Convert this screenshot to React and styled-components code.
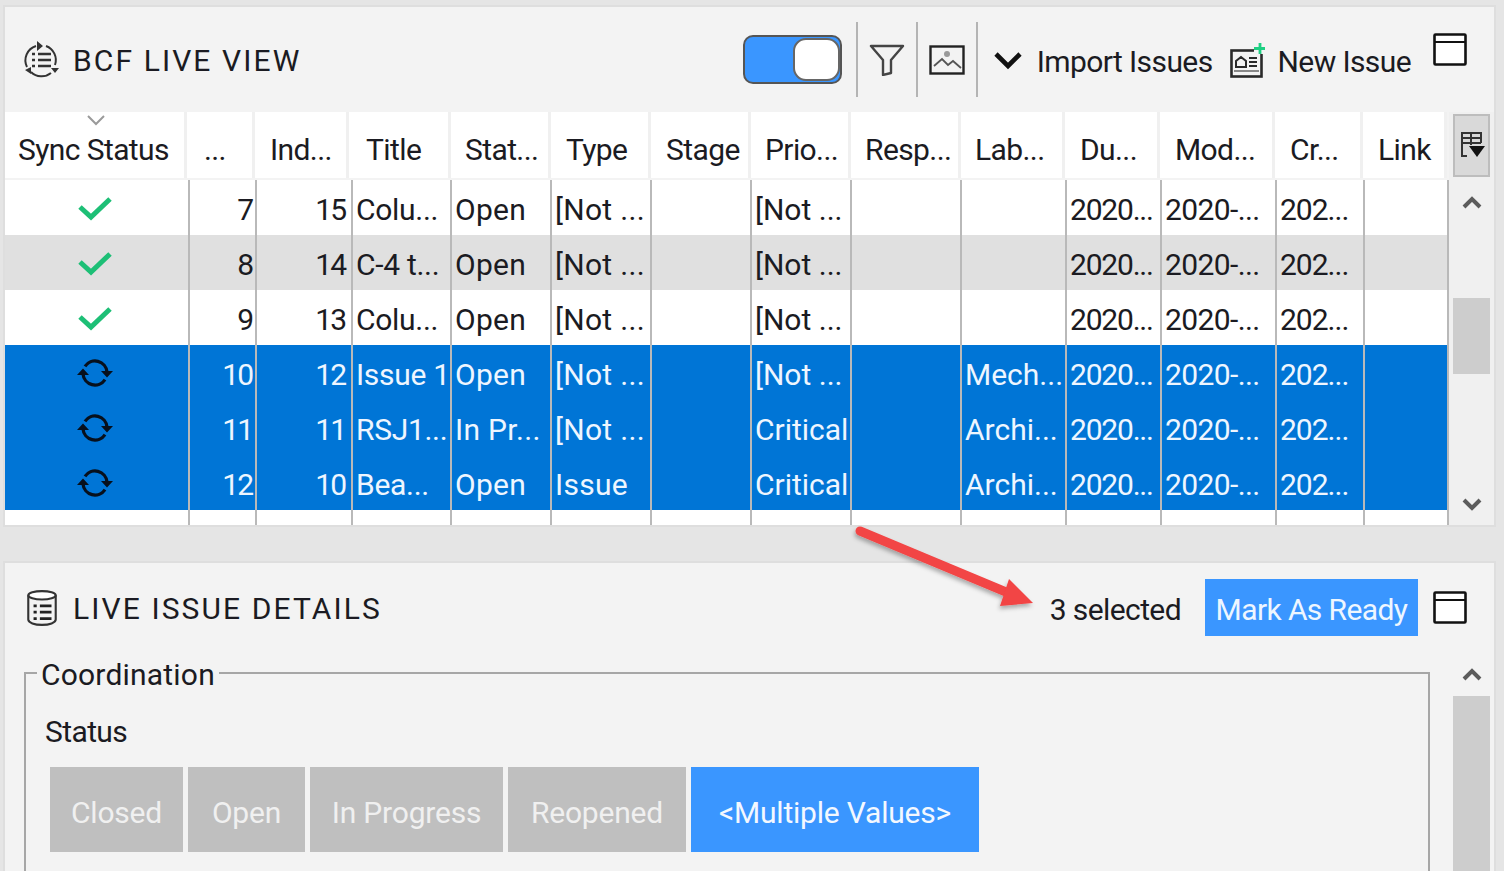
import React from "react";
import styled, { createGlobalStyle } from "styled-components";

const GlobalStyle = createGlobalStyle`
  html, body {
    margin: 0;
    padding: 0;
    background: #e5e5e5;
  }
`;

const BODY_COLS = "185px 67px 96px 99px 100px 100px 100px 100px 110px 105px 95px 115px 88px 84px";
const HEAD_COLS = "182px 68px 94px 102px 100px 100px 100px 100px 110px 104px 95px 115px 88px 84px";

const Page = styled.div`
  position: relative;
  width: 1504px;
  height: 871px;
  overflow: hidden;
  padding: 7px 10px 0 5px;
  box-sizing: border-box;
  background: #e5e5e5;
  font-family: Roboto, "Open Sans", sans-serif;
  font-size: 30px;
  letter-spacing: -0.6px;
  color: #1b1b22;
`;

const Panel = styled.section`
  background: #f3f3f3;
  box-shadow: 0 0 0 2px #dedede;
`;

const PanelHeader = styled.header`
  display: flex;
  align-items: center;
  height: ${(p) => p.$height}px;
  padding-left: ${(p) => p.$inset}px;
`;

const PanelTitle = styled.h2`
  margin: 0 0 0 ${(p) => p.$gap}px;
  padding-top: 2px;
  font-size: 30px;
  font-weight: 400;
  letter-spacing: 2.1px;
  white-space: nowrap;
`;

const Tools = styled.div`
  display: flex;
  align-items: center;
  margin-left: auto;
  height: 100%;
`;

const Toggle = styled.div`
  position: relative;
  width: 99px;
  height: 49px;
  box-sizing: border-box;
  border: 2px solid #555;
  border-radius: 10px;
  background: #3a96ff;
  margin-right: 14px;
`;

const Knob = styled.span`
  position: absolute;
  top: 1px;
  right: 0;
  width: 47px;
  height: 43px;
  box-sizing: border-box;
  border: 2px solid #666;
  border-radius: 13px;
  background: #fff;
`;

const Divider = styled.span`
  width: 2px;
  height: 75px;
  background: #b4b4b4;
`;

const ToolSlot = styled.span`
  display: flex;
  align-items: center;
  justify-content: center;
  width: 58px;
`;

const MenuChevron = styled.span`
  display: flex;
  margin: 0 14px 0 15px;
`;

const ToolLabel = styled.span`
  white-space: nowrap;
  padding-top: 3px;
  margin: ${(p) => p.$margin};
`;

const TableArea = styled.div`
  display: flex;
`;

const TableMain = styled.div`
  width: 1444px;
`;

const HeadRow = styled.div`
  display: grid;
  grid-template-columns: ${HEAD_COLS};
  height: 68px;
  background: #f3f3f3;
`;

const HeadCell = styled.div`
  position: relative;
  display: flex;
  align-items: center;
  height: 66px;
  padding: 9px 0 0 ${(p) => p.$pad}px;
  box-sizing: border-box;
  background: #fff;
  border-right: 3px solid #f0f0f0;
  white-space: nowrap;
  overflow: hidden;
`;

const SortMark = styled.svg`
  position: absolute;
  top: 2px;
  left: 81px;
`;

const Row = styled.div`
  display: grid;
  grid-template-columns: ${BODY_COLS};
  height: ${(p) => p.$height || 55}px;
  background: ${(p) => (p.$selected ? "#0075d6" : p.$shaded ? "#e0e0e0" : "#fff")};
  color: ${(p) => (p.$selected ? "#eef6ff" : "#1b1b22")};
`;

const Cell = styled.div`
  display: flex;
  align-items: center;
  padding: 3px 0 0 3px;
  box-sizing: border-box;
  border-right: 2px solid #b9b9b9;
  letter-spacing: ${(p) => p.$spacing ?? 0.3}px;
  white-space: nowrap;
  overflow: hidden;
`;

const NumberCell = styled(Cell)`
  justify-content: flex-end;
  padding: 3px ${(p) => p.$pad}px 0 0;
  letter-spacing: -2px;
`;

const IconCell = styled(Cell)`
  justify-content: center;
  padding: 0 3px 0 0;
`;

const ScrollTrack = styled.div`
  flex: 1;
  display: flex;
  flex-direction: column;
  padding-left: 4px;
  background: #f0f0f0;
`;

const ColumnPicker = styled.div`
  display: flex;
  align-items: center;
  justify-content: center;
  width: 37px;
  height: 63px;
  margin: 2px 0 3px;
  box-sizing: border-box;
  background: #d9d9d9;
  border: 2px solid #bdbdbd;
`;

const ScrollBar = styled.div`
  display: flex;
  flex-direction: column;
  align-items: center;
  width: 37px;
  height: ${(p) => p.$height}px;
  overflow: hidden;
`;

const ScrollButton = styled.div`
  display: flex;
  align-items: center;
  justify-content: center;
  flex: none;
  width: 100%;
  height: ${(p) => p.$height}px;
  padding-top: ${(p) => p.$nudge || 0}px;
  box-sizing: border-box;
`;

const ScrollThumb = styled.div`
  flex: none;
  width: 100%;
  height: ${(p) => p.$height}px;
  margin: ${(p) => p.$margin || 0};
  background: #cdcdcd;
`;

const LowerPanel = styled(Panel)`
  margin-top: 38px;
  height: 320px;
`;

const SelectedCount = styled.span`
  white-space: nowrap;
  padding-top: 3px;
  margin-right: 24px;
`;

const ReadyButton = styled.button`
  width: 213px;
  height: 57px;
  margin-right: 15px;
  padding: 4px 0 0;
  border: 0;
  background: #3a96ff;
  color: #eef6ff;
  font: inherit;
  letter-spacing: inherit;
  white-space: nowrap;
`;

const WindowSlot = styled.span`
  display: flex;
  margin-right: 27px;
  transform: translateY(${(p) => p.$shift || 0}px);
`;

const DetailsArea = styled.div`
  display: flex;
  height: 231px;
`;

const Group = styled.fieldset`
  width: 1406px;
  height: 300px;
  margin: 0 0 0 19px;
  padding: 18px 0 0 19px;
  box-sizing: border-box;
  border: 2px solid #a6a6a6;
`;

const GroupLegend = styled.legend`
  margin-left: -8px;
  padding: 4px 4px 0;
  line-height: 38px;
  letter-spacing: 0.2px;
`;

const FieldLabel = styled.div`
  line-height: 40px;
`;

const StatusRow = styled.div`
  display: flex;
  gap: 5px;
  margin: 15px 0 0 5px;
`;

const StatusButton = styled.div`
  display: flex;
  align-items: center;
  justify-content: center;
  width: ${(p) => p.$width}px;
  height: 85px;
  padding-top: 5px;
  box-sizing: border-box;
  background: ${(p) => (p.$active ? "#3a96ff" : "#bfbfbf")};
  color: ${(p) => (p.$active ? "#f3f8ff" : "#f0f0f0")};
  letter-spacing: -0.2px;
  white-space: nowrap;
`;

const DetailsScroll = styled.div`
  margin-left: 23px;
`;

const AnnotationArrow = styled.svg`
  position: absolute;
  left: 0;
  top: 0;
  pointer-events: none;
`;

const HEADERS = [
  { label: "Sync Status", pad: 13 },
  { label: "...", pad: 17 },
  { label: "Ind...", pad: 15 },
  { label: "Title", pad: 17 },
  { label: "Stat...", pad: 14 },
  { label: "Type", pad: 15 },
  { label: "Stage", pad: 15 },
  { label: "Prio...", pad: 14 },
  { label: "Resp...", pad: 14 },
  { label: "Lab...", pad: 14 },
  { label: "Du...", pad: 15 },
  { label: "Mod...", pad: 15 },
  { label: "Cr...", pad: 15 },
  { label: "Link", pad: 15 },
];

const ROWS = [
  { state: "done", n: "7", index: "15", title: "Colu...", status: "Open", type: "[Not ...", prio: "[Not ...", label: "" },
  { state: "done", n: "8", index: "14", title: "C-4 t...", status: "Open", type: "[Not ...", prio: "[Not ...", label: "", shaded: true },
  { state: "done", n: "9", index: "13", title: "Colu...", status: "Open", type: "[Not ...", prio: "[Not ...", label: "" },
  { state: "sync", n: "10", index: "12", title: "Issue 1", status: "Open", type: "[Not ...", prio: "[Not ...", label: "Mech..." },
  { state: "sync", n: "11", index: "11", title: "RSJ1...", status: "In Pr...", type: "[Not ...", prio: "Critical", label: "Archi..." },
  { state: "sync", n: "12", index: "10", title: "Bea...", status: "Open", type: "Issue", prio: "Critical", label: "Archi..." },
];

const STATUSES = [
  { label: "Closed", width: 133 },
  { label: "Open", width: 117 },
  { label: "In Progress", width: 193 },
  { label: "Reopened", width: 178 },
  { label: "<Multiple Values>", width: 288, active: true },
];

function CheckIcon() {
  return (
    <svg width="36" height="26" viewBox="0 0 36 26">
      <path d="M3 12l11 10L33 4" fill="none" stroke="#1dbf76" strokeWidth="5" />
    </svg>
  );
}

function SyncIcon() {
  return (
    <svg width="36" height="28" viewBox="0 0 36 28" fill="none" stroke="#07101c" strokeWidth="3.2">
      <path d="M8 7.400A12 12 0 0 1 30 13" />
      <path d="M28 20.600A12 12 0 0 1 6 15" />
      <path d="M24 12h12l-6 6.500zM0 16h12l-6-6.500z" fill="#07101c" stroke="none" />
    </svg>
  );
}

function SyncListIcon() {
  return (
    <svg width="38" height="40" viewBox="0 0 38 40" fill="none" stroke="#333">
      <path d="M14 6A15 15 0 0 0 5 27M9 32a15 15 0 0 0 20 1M33 25A15 15 0 0 0 24 6" strokeWidth="2" />
      <path d="M15 1l6 5-6 5zM29 28h8l-4 5zM3 30l6-3v7z" fill="#333" stroke="none" />
      <path d="M10 14h3M16 14h13M10 20h3M16 20h13M10 26h3M16 26h13" strokeWidth="2.6" />
    </svg>
  );
}

function DatabaseIcon() {
  return (
    <svg width="34" height="38" viewBox="0 0 32 36" fill="none" stroke="#333" strokeWidth="2">
      <ellipse cx="16" cy="6" rx="13" ry="4" fill="#fff" />
      <path d="M3 6v23c0 3 6 5 13 5s13-2 13-5V6" />
      <path d="M8 16h3M14 16h11M8 22h3M14 22h11M8 28h3M14 28h11" strokeWidth="2.6" stroke="#222" />
    </svg>
  );
}

function FilterIcon() {
  return (
    <svg width="36" height="32" viewBox="0 0 36 32" fill="none" stroke="#444" strokeWidth="2.4">
      <path d="M2 2h32L22 16v13l-8 2V16z" strokeLinejoin="round" />
    </svg>
  );
}

function ImageIcon() {
  return (
    <svg width="36" height="30" viewBox="0 0 36 30" fill="none">
      <rect x="1.5" y="1.5" width="33" height="27" stroke="#222" strokeWidth="2.4" />
      <circle cx="18" cy="9" r="3" fill="#999" />
      <path d="M5 21l8-7 6 6 5-4 8 7" stroke="#555" strokeWidth="1.8" />
    </svg>
  );
}

function ChevronIcon() {
  return (
    <svg width="30" height="20" viewBox="0 0 30 20">
      <path d="M3 4l12 12L27 4" fill="none" stroke="#111" strokeWidth="4.6" />
    </svg>
  );
}

function NewIssueIcon() {
  return (
    <svg width="36" height="36" viewBox="0 0 36 36" fill="none" stroke="#2a2a2a">
      <rect x="1.5" y="8.500" width="30" height="26" strokeWidth="2.6" fill="#f3f3f3" />
      <path d="M6 25v-6l5-4 5 4v6zM19 16h8M19 20h8M19 24h8" strokeWidth="2" />
      <path d="M4 29h25" strokeWidth="2" stroke="#888" />
      <path d="M24 0h12v12H24z" fill="#f3f3f3" stroke="none" />
      <path d="M30 1v11M24 6.500h11" stroke="#1dcf82" strokeWidth="2.8" />
    </svg>
  );
}

function WindowIcon() {
  return (
    <svg width="34" height="33" viewBox="0 0 34 33" fill="#fff" stroke="#111" strokeWidth="2.6">
      <rect x="1.5" y="1.5" width="31" height="30" rx="1" />
      <path d="M2 9h30" strokeWidth="2" />
    </svg>
  );
}

function ColumnsIcon() {
  return (
    <svg width="28" height="30" viewBox="0 0 28 30">
      <path d="M4 19V2h19v10M4 7h19M4 12h19M13 2v12M4 19v6h5" fill="none" stroke="#333" strokeWidth="2" />
      <path d="M11 15h16l-8 11z" fill="#111" />
    </svg>
  );
}

function ScrollChevron({ down }) {
  return (
    <svg width="20" height="14" viewBox="0 0 20 14">
      <path d={down ? "M2 3l8 8 8-8" : "M2 11l8-8 8 8"} fill="none" stroke="#5c5c5c" strokeWidth="4" />
    </svg>
  );
}

function IssueRow({ row }) {
  const selected = row.state === "sync";
  return (
    <Row $selected={selected} $shaded={row.shaded}>
      <IconCell>{row.state === "done" ? <CheckIcon /> : <SyncIcon />}</IconCell>
      <NumberCell $pad={3}>{row.n}</NumberCell>
      <NumberCell $pad={6}>{row.index}</NumberCell>
      <Cell $spacing={-0.3}>{row.title}</Cell>
      <Cell>{row.status}</Cell>
      <Cell>{row.type}</Cell>
      <Cell />
      <Cell $spacing={0}>{row.prio}</Cell>
      <Cell />
      <Cell $spacing={0}>{row.label}</Cell>
      <Cell $spacing={-1.2}>2020...</Cell>
      <Cell $spacing={-0.6}>2020-...</Cell>
      <Cell $spacing={-1}>202...</Cell>
      <Cell />
    </Row>
  );
}

export default function App() {
  return (
    <>
      <GlobalStyle />
      <Page>
        <Panel>
          <PanelHeader $height={105} $inset={17}>
            <SyncListIcon />
            <PanelTitle $gap={13}>BCF LIVE VIEW</PanelTitle>
            <Tools>
              <Toggle>
                <Knob />
              </Toggle>
              <Divider />
              <ToolSlot>
                <FilterIcon />
              </ToolSlot>
              <Divider />
              <ToolSlot>
                <ImageIcon />
              </ToolSlot>
              <Divider />
              <MenuChevron>
                <ChevronIcon />
              </MenuChevron>
              <ToolLabel $margin="0 17px 0 0">Import Issues</ToolLabel>
              <NewIssueIcon />
              <ToolLabel $margin="0 22px 0 12px">New Issue</ToolLabel>
              <WindowSlot $shift={-10}>
                <WindowIcon />
              </WindowSlot>
            </Tools>
          </PanelHeader>
          <TableArea>
            <TableMain>
              <HeadRow>
                {HEADERS.map((h, i) => (
                  <HeadCell key={h.label} $pad={h.pad}>
                    {i === 0 && (
                      <SortMark width="20" height="12" viewBox="0 0 20 12">
                        <path d="M2 2l8 8 8-8" fill="none" stroke="#9a9a9a" strokeWidth="2" />
                      </SortMark>
                    )}
                    {h.label}
                  </HeadCell>
                ))}
              </HeadRow>
              {ROWS.map((row) => (
                <IssueRow key={row.n} row={row} />
              ))}
              <Row $height={15}>
                {HEADERS.map((h) => (
                  <Cell key={h.label} />
                ))}
              </Row>
            </TableMain>
            <ScrollTrack>
              <ColumnPicker>
                <ColumnsIcon />
              </ColumnPicker>
              <ScrollBar $height={345}>
                <ScrollButton $height={46}>
                  <ScrollChevron />
                </ScrollButton>
                <ScrollThumb $height={76} $margin="72px 0 108px" />
                <ScrollButton $height={43}>
                  <ScrollChevron down />
                </ScrollButton>
              </ScrollBar>
            </ScrollTrack>
          </TableArea>
        </Panel>
        <LowerPanel>
          <PanelHeader $height={89} $inset={20}>
            <DatabaseIcon />
            <PanelTitle $gap={14}>LIVE ISSUE DETAILS</PanelTitle>
            <Tools>
              <SelectedCount>3 selected</SelectedCount>
              <ReadyButton>Mark As Ready</ReadyButton>
              <WindowSlot>
                <WindowIcon />
              </WindowSlot>
            </Tools>
          </PanelHeader>
          <DetailsArea>
            <Group>
              <GroupLegend>Coordination</GroupLegend>
              <FieldLabel>Status</FieldLabel>
              <StatusRow>
                {STATUSES.map((s) => (
                  <StatusButton key={s.label} $width={s.width} $active={s.active}>
                    {s.label}
                  </StatusButton>
                ))}
              </StatusRow>
            </Group>
            <DetailsScroll>
              <ScrollBar $height={231}>
                <ScrollButton $height={44} $nudge={2}>
                  <ScrollChevron />
                </ScrollButton>
                <ScrollThumb $height={190} />
              </ScrollBar>
            </DetailsScroll>
          </DetailsArea>
        </LowerPanel>
        <AnnotationArrow width="1504" height="871" viewBox="0 0 1504 871">
          <defs>
            <filter id="arrowShadow" x="-10%" y="-10%" width="120%" height="130%">
              <feDropShadow dx="-1" dy="3" stdDeviation="2" floodColor="#000" floodOpacity="0.3" />
            </filter>
          </defs>
          <g filter="url(#arrowShadow)" fill="#f24444">
            <path d="M860 531L1006 592" stroke="#f24444" strokeWidth="9" strokeLinecap="round" />
            <path d="M1033 603L1000 606L1009 579z" />
          </g>
        </AnnotationArrow>
      </Page>
    </>
  );
}
